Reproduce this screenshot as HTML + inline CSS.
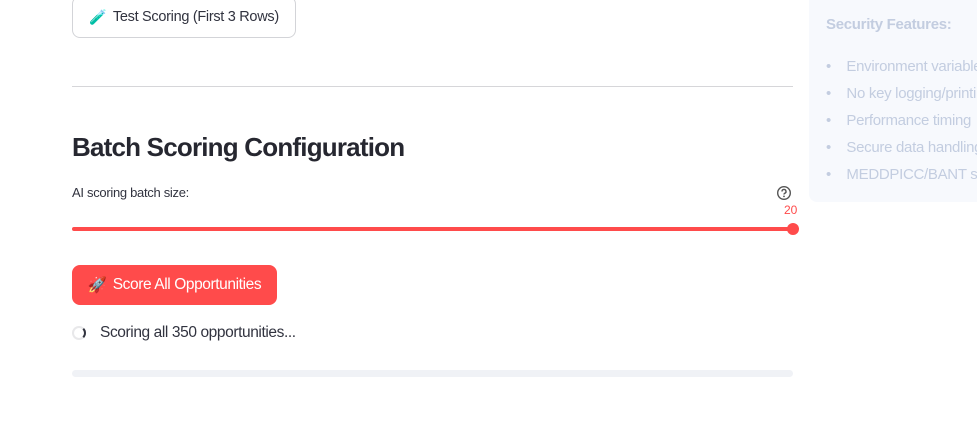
<!DOCTYPE html>
<html><head><style>
*{margin:0;padding:0;box-sizing:border-box}
body{width:977px;height:438px;background:#fff;font-family:"Liberation Sans",sans-serif;color:#31333f;position:relative;overflow:hidden}
.abs{position:absolute}
.btn{border:1px solid #d3d4d8;border-radius:8px;background:#fff;font-size:14px;display:flex;align-items:center;justify-content:center;white-space:nowrap}
</style></head><body>
<div class="abs btn" style="left:72px;top:-4px;width:224px;height:42px;font-size:14.5px;letter-spacing:-0.3px"><span style="color:#7bc043;margin-right:6px">🧪</span>Test Scoring (First 3 Rows)</div>
<div class="abs" style="left:72px;top:86px;width:721px;height:1px;background:#d6d6d9"></div>
<div class="abs" style="left:72px;top:132px;font-size:26px;font-weight:bold;letter-spacing:-0.8px;color:#262730">Batch Scoring Configuration</div>
<div class="abs" style="left:72px;top:185px;font-size:13px;letter-spacing:-0.3px">AI scoring batch size:</div>
<svg class="abs" style="left:776px;top:185px" width="16" height="16" viewBox="0 0 16 16"><circle cx="8" cy="8" r="6.3" fill="none" stroke="#555" stroke-width="1.4"/><path d="M6 6.5a2 2 0 1 1 2.8 1.8c-.6.3-.8.6-.8 1.2" fill="none" stroke="#555" stroke-width="1.4"/><circle cx="8" cy="11.4" r=".9" fill="#555"/></svg>
<div class="abs" style="left:784px;top:203px;font-size:12px;color:#ff4b4b">20</div>
<div class="abs" style="left:72px;top:227px;width:721px;height:4px;background:#ff4b4b;border-radius:2px"></div>
<div class="abs" style="left:787px;top:223px;width:12px;height:12px;border-radius:50%;background:#ff4b4b"></div>
<div class="abs btn" style="left:72px;top:265px;width:205px;height:40px;background:#ff4b4b;border-color:#ff4b4b;color:#fff;font-size:15.5px;letter-spacing:-0.4px"><span style="margin-right:6px">🚀</span>Score All Opportunities</div>
<div class="abs" style="left:72px;top:326px;width:14px;height:14px;border-radius:50%;border:2px solid #e8e8ea;border-right-color:#31333f"></div>
<div class="abs" style="left:100px;top:324px;font-size:15.5px;letter-spacing:-0.4px">Scoring all 350 opportunities...</div>
<div class="abs" style="left:72px;top:370px;width:721px;height:7px;background:#f0f2f6;border-radius:4px"></div>
<div class="abs" style="left:809px;top:-10px;width:200px;height:212px;background:#f7f9fd;border-radius:8px;color:#c3cde0;font-size:15px;letter-spacing:-0.3px;white-space:nowrap">
<div class="abs" style="left:17px;top:26px;font-weight:bold">Security Features:</div>
<div class="abs" style="left:17px;top:63px;line-height:27px">
<div>•&nbsp;&nbsp;&nbsp;&nbsp;Environment variables</div>
<div>•&nbsp;&nbsp;&nbsp;&nbsp;No key logging/printing</div>
<div>•&nbsp;&nbsp;&nbsp;&nbsp;Performance timing</div>
<div>•&nbsp;&nbsp;&nbsp;&nbsp;Secure data handling</div>
<div>•&nbsp;&nbsp;&nbsp;&nbsp;MEDDPICC/BANT scoring</div>
</div></div>
</body></html>
